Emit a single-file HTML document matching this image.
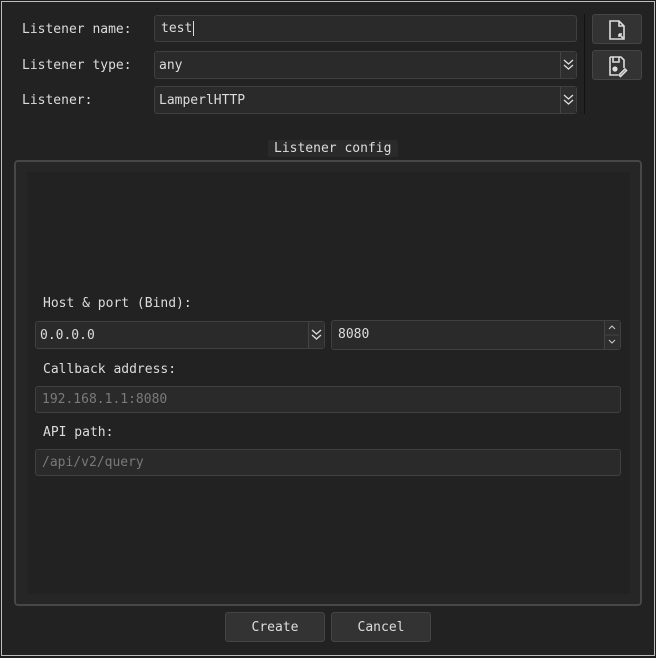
<!DOCTYPE html>
<html><head><style>
*{box-sizing:border-box;margin:0;padding:0}
body{width:656px;height:658px;background:#1e1e1e;font-family:"DejaVu Sans Mono","Liberation Mono",monospace;font-size:13px;color:#dcdcdc;position:relative;overflow:hidden}
.frame{position:absolute;left:1px;top:1px;width:654px;height:655px;border:1px solid #bdbdbd;background:#222222}
.a{position:absolute}
.lbl{position:absolute;line-height:16px}
.inp{position:absolute;background:#2a2a2a;border:1px solid #404040;border-radius:3px;line-height:28px;padding-left:6px}
.arr{position:absolute;right:0;top:0;bottom:0;width:16px;border-left:1px solid #444;background:#2e2e2e}
.arr svg{position:absolute;left:2px;top:6px}
.btn{position:absolute;background:#333;border:1px solid #454545;border-radius:3px;text-align:center;color:#ddd}
</style></head><body>
<div class="frame"></div>
<div class="lbl" style="left:22px;top:22px">Listener name:</div>
<div class="lbl" style="left:22px;top:58px">Listener type:</div>
<div class="lbl" style="left:22px;top:93px">Listener:</div>
<div class="inp" style="left:154px;top:15px;width:423px;height:27px;line-height:26px">test<span style="border-left:1px solid #ddd;margin-left:1px"></span></div>
<div class="inp" style="left:154px;top:51px;width:423px;height:28px;padding-left:4px">any<div class="arr"><svg width="11" height="14" viewBox="0 0 11 14" fill="none" stroke="#ddd" stroke-width="1.3"><path d="M1 2l4.5 4 4.5-4 M1 7l4.5 4 4.5-4"/></svg></div></div>
<div class="inp" style="left:154px;top:86px;width:423px;height:28px;padding-left:4px">LamperlHTTP<div class="arr"><svg width="11" height="14" viewBox="0 0 11 14" fill="none" stroke="#ddd" stroke-width="1.3"><path d="M1 2l4.5 4 4.5-4 M1 7l4.5 4 4.5-4"/></svg></div></div>
<div class="a" style="left:584px;top:14px;width:1px;height:100px;background:#111"></div>
<div class="btn" style="left:592px;top:14px;width:50px;height:30px">
<svg width="24" height="24" viewBox="0 0 24 24" style="margin-top:3px" fill="none" stroke="#ddd" stroke-width="1.6"><path d="M5 3h9l5 5v13H5z M14 3v5h5"/><path d="M14 16l4 4 M14 16v3 M14 16h3"/></svg></div>
<div class="btn" style="left:592px;top:50px;width:50px;height:30px">
<svg width="24" height="24" viewBox="0 0 24 24" style="margin-top:3px" fill="none" stroke="#ddd" stroke-width="1.6"><path d="M5 3h11l3 3v8 M5 3v18h8 M8 3v5h6V3"/><circle cx="10" cy="15" r="1.8" fill="#ddd"/><path d="M14 21l6-6 1.5 1.5-6 6z"/></svg></div>
<div class="a" style="left:268px;top:140px;width:130px;height:17px;background:#2a2a2a;border-radius:2px"></div>
<div class="lbl" style="left:274px;top:141px">Listener config</div>
<div class="a" style="left:14px;top:160px;width:628px;height:446px;border:2px solid #474747;border-radius:4px;background:#262626"></div>
<div class="a" style="left:27px;top:172px;width:603px;height:422px;background:#222222"></div>
<div class="lbl" style="left:43px;top:296px">Host &amp; port (Bind):</div>
<div class="inp" style="left:35px;top:321px;width:290px;height:28px;padding-left:4px">0.0.0.0<div class="arr"><svg width="11" height="14" viewBox="0 0 11 14" fill="none" stroke="#ddd" stroke-width="1.3"><path d="M1 2l4.5 4 4.5-4 M1 7l4.5 4 4.5-4"/></svg></div></div>
<div class="inp" style="left:331px;top:320px;width:290px;height:30px">8080<div class="a" style="right:0;top:0;bottom:0;width:16px;border-left:1px solid #444;background:#2e2e2e"><svg width="14" height="28" viewBox="0 0 14 28" fill="none" stroke="#ccc" stroke-width="1"><path d="M4 8l3-3 3 3 M4 19l3 3 3-3"/><path d="M0 14h16" stroke="#444"/></svg></div></div>
<div class="lbl" style="left:43px;top:362px">Callback address:</div>
<div class="inp" style="left:35px;top:386px;width:586px;height:27px;line-height:26px;color:#7a7a7a">192.168.1.1:8080</div>
<div class="lbl" style="left:43px;top:425px">API path:</div>
<div class="inp" style="left:35px;top:449px;width:586px;height:27px;line-height:26px;color:#7a7a7a">/api/v2/query</div>
<div class="btn" style="left:225px;top:612px;width:100px;height:30px;line-height:30px">Create</div>
<div class="btn" style="left:331px;top:612px;width:100px;height:30px;line-height:30px">Cancel</div>
</body></html>
